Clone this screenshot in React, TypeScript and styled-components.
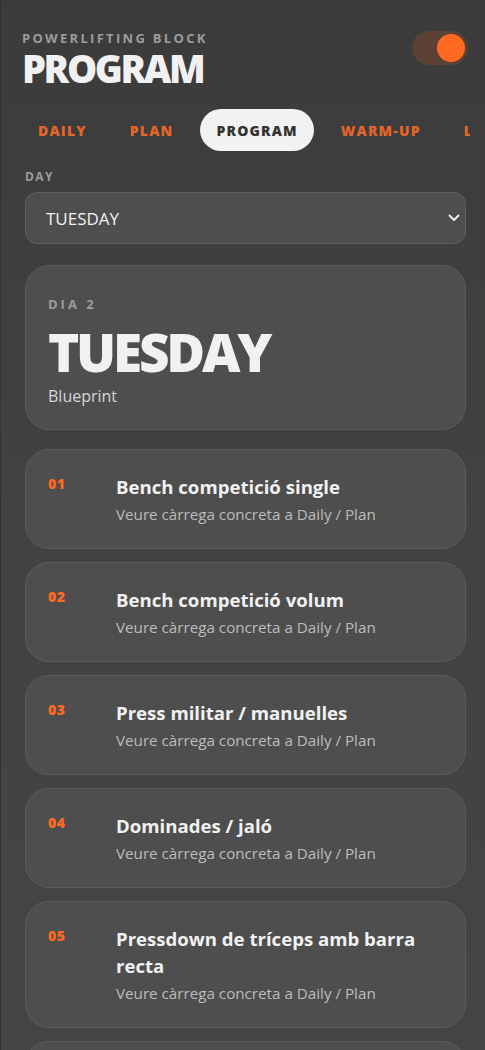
import React, { useState } from 'react';
import styled, { createGlobalStyle } from 'styled-components';

const palette = {
  orange: '#ff6a20',
  tabOrange: '#e2662a',
  text: '#f1f1f1',
  muted: '#9c9c9c',
  sub: '#bcbcbc',
  card: '#4e4e4e',
  cardBorder: '#5c5c5c',
};

const font = `"Open Sans", "Noto Sans", "Liberation Sans", sans-serif`;

const GlobalStyle = createGlobalStyle`
  html, body {
    margin: 0;
    padding: 0;
    background: #3f3f3f;
  }
  body {
    font-family: ${font};
    color: ${palette.text};
    -webkit-font-smoothing: antialiased;
  }
  * { box-sizing: border-box; }
`;

const Page = styled.div`
  min-height: 1050px;
  border-left: 1px solid #333;
  background: linear-gradient(180deg, #3b3b3b 0%, #424242 45%, #454545 100%);
  overflow: hidden;
`;

const Header = styled.header`
  display: flex;
  justify-content: space-between;
  align-items: flex-start;
  padding: 29px 17px 0 21px;
`;

const Eyebrow = styled.div<{ $spacing?: number }>`
  font-size: 13px;
  font-weight: 700;
  letter-spacing: ${({ $spacing }) => $spacing ?? 2.3}px;
  line-height: 18px;
  color: ${palette.muted};
  text-transform: uppercase;
`;

const PageTitle = styled.h1`
  margin: 1px 0 0;
  font-size: 38px;
  font-weight: 800;
  letter-spacing: -2.4px;
  line-height: 40px;
  color: ${palette.text};
`;

const Toggle = styled.button<{ $on: boolean }>`
  margin-top: 2px;
  width: 56px;
  height: 34px;
  border: none;
  border-radius: 17px;
  padding: 3px;
  background: #5b4136;
  display: flex;
  justify-content: ${({ $on }) => ($on ? 'flex-end' : 'flex-start')};
  cursor: pointer;
`;

const Knob = styled.span`
  width: 28px;
  height: 28px;
  border-radius: 50%;
  background: ${palette.orange};
`;

const Tabs = styled.nav`
  display: flex;
  gap: 11px;
  margin: 21px 15px 0 0;
  padding-left: 21px;
  white-space: nowrap;
  overflow: hidden;
`;

const Tab = styled.button<{ $active?: boolean }>`
  flex-shrink: 0;
  height: 42px;
  padding: 0 16px;
  border: none;
  border-radius: 21px;
  font-family: ${font};
  font-size: 14px;
  font-weight: 800;
  letter-spacing: 1.2px;
  background: ${({ $active }) => ($active ? '#f2f2f2' : 'transparent')};
  color: ${({ $active }) => ($active ? '#333' : palette.tabOrange)};
  cursor: pointer;
`;

const Main = styled.main`
  display: flex;
  flex-direction: column;
  padding: 17px 19px 0 24px;
`;

const FieldLabel = styled.label`
  font-size: 12px;
  font-weight: 700;
  letter-spacing: 1.4px;
  line-height: 18px;
  color: ${palette.muted};
  margin-bottom: 6px;
`;

const SelectWrap = styled.div`
  position: relative;
  margin-bottom: 21px;
`;

const Select = styled.select`
  appearance: none;
  width: 100%;
  height: 52px;
  padding: 0 40px 0 20px;
  border-radius: 12px;
  border: 1px solid #5f5f5f;
  background: #4e4e4e;
  color: ${palette.text};
  font-family: ${font};
  font-size: 17px;
  outline: none;
`;

const Chevron = styled.svg`
  position: absolute;
  right: 6px;
  top: 22px;
  pointer-events: none;
`;

const Card = styled.section<{ $hero?: boolean }>`
  background: ${palette.card};
  border: 1px solid ${palette.cardBorder};
  border-radius: 24px;
  padding: ${({ $hero }) => ($hero ? '29px 22px 22px' : '23px 22px 23px')};
`;

const HeroTitle = styled.div`
  font-size: 53px;
  font-weight: 800;
  letter-spacing: -3.2px;
  line-height: 56px;
  margin: 11px 0 5px;
  color: ${palette.text};
`;

const HeroSub = styled.div`
  font-size: 16px;
  line-height: 22px;
  color: #d6d6d6;
`;

const List = styled.div`
  display: flex;
  flex-direction: column;
  gap: 13px;
  margin-top: 19px;
`;

const ExerciseRow = styled.div`
  display: grid;
  grid-template-columns: 44px 1fr;
  column-gap: 24px;
`;

const Index = styled.div`
  font-size: 14px;
  font-weight: 800;
  letter-spacing: 0.6px;
  line-height: 22px;
  color: ${palette.orange};
`;

const ExerciseName = styled.div`
  font-size: 18.6px;
  font-weight: 700;
  line-height: 27px;
  color: ${palette.text};
`;

const ExerciseNote = styled.div`
  margin-top: 3px;
  font-size: 15.2px;
  line-height: 22px;
  color: ${palette.sub};
`;

const tabs = ['DAILY', 'PLAN', 'PROGRAM', 'WARM-UP', 'LOG'];
const days = ['MONDAY', 'TUESDAY', 'WEDNESDAY', 'THURSDAY', 'FRIDAY'];

const exercises = [
  'Bench competició single',
  'Bench competició volum',
  'Press militar / manuelles',
  'Dominades / jaló',
  'Pressdown de tríceps amb barra recta',
  'Curl de bíceps',
];

export default function App() {
  const [on, setOn] = useState(true);
  const [day, setDay] = useState('TUESDAY');

  return (
    <Page>
      <GlobalStyle />
      <Header>
        <div>
          <Eyebrow>Powerlifting block</Eyebrow>
          <PageTitle>PROGRAM</PageTitle>
        </div>
        <Toggle $on={on} onClick={() => setOn(!on)} aria-label="Toggle">
          <Knob />
        </Toggle>
      </Header>

      <Tabs>
        {tabs.map((t) => (
          <Tab key={t} $active={t === 'PROGRAM'}>
            {t}
          </Tab>
        ))}
      </Tabs>

      <Main>
        <FieldLabel htmlFor="day">DAY</FieldLabel>
        <SelectWrap>
          <Select id="day" value={day} onChange={(e) => setDay(e.target.value)}>
            {days.map((d) => (
              <option key={d}>{d}</option>
            ))}
          </Select>
          <Chevron width="12" height="8" viewBox="0 0 12 8" fill="none">
            <path d="M1.5 1.5L6 6L10.5 1.5" stroke="#f1f1f1" strokeWidth="1.8" strokeLinecap="round" strokeLinejoin="round" />
          </Chevron>
        </SelectWrap>

        <Card $hero>
          <Eyebrow $spacing={3}>DIA 2</Eyebrow>
          <HeroTitle>{day}</HeroTitle>
          <HeroSub>Blueprint</HeroSub>
        </Card>

        <List>
          {exercises.map((name, i) => (
            <Card key={name}>
              <ExerciseRow>
                <Index>{String(i + 1).padStart(2, '0')}</Index>
                <div>
                  <ExerciseName>{name}</ExerciseName>
                  <ExerciseNote>Veure càrrega concreta a Daily / Plan</ExerciseNote>
                </div>
              </ExerciseRow>
            </Card>
          ))}
        </List>
      </Main>
    </Page>
  );
}
